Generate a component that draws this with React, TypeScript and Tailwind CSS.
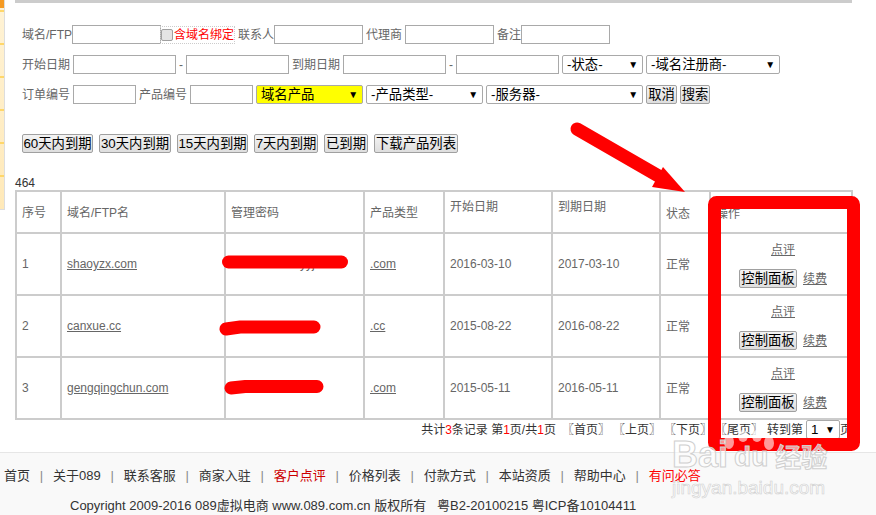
const cjk = "font-['Liberation_Sans','Noto_Sans_CJK_SC',sans-serif]";

function Field({ w }: { w: string }) {
  return <input className={`h-[19px] shrink-0 border border-[#a9a9a9] bg-white ${w}`} />;
}

function Picker({ w, label, yellow }: { w: string; label: string; yellow?: boolean }) {
  return (
    <div className={`flex h-[19px] shrink-0 items-center justify-between rounded-[2px] border border-[#a9a9a9] pl-[4px] pr-[4px] text-[13.33px] text-black ${yellow ? 'bg-[#ffff00]' : 'bg-white'} ${w}`}>
      <span>{label}</span>
      <span className="text-[10px]">▼</span>
    </div>
  );
}

function Btn({ children, className = '' }: { children: React.ReactNode; className?: string }) {
  return (
    <button className={`flex h-[19px] shrink-0 items-center justify-center rounded-[2px] border border-[#a0a0a0] bg-linear-to-b from-[#f4f4f4] to-[#dedede] text-[13.33px] text-black ${className}`}>
      {children}
    </button>
  );
}

const rows = [
  { no: '1', name: 'shaoyzx.com', type: '.com', start: '2016-03-10', end: '2017-03-10' },
  { no: '2', name: 'canxue.cc', type: '.cc', start: '2015-08-22', end: '2016-08-22' },
  { no: '3', name: 'gengqingchun.com', type: '.com', start: '2015-05-11', end: '2016-05-11' },
];

const navItems = ['首页', '关于089', '联系客服', '商家入驻', '客户点评', '价格列表', '付款方式', '本站资质', '帮助中心', '有问必答'];

const td = 'border-2 border-[#cccccc] px-[5px] font-normal';

export default function App() {
  return (
    <div className={`relative h-[515px] w-[876px] overflow-hidden bg-white text-left text-[12px] text-[#666666] ${cjk}`}>
      {/* left side strip */}
      <div className="absolute left-0 top-0 flex h-[210px] w-[5px] flex-col border-r border-b border-[#dddddd] bg-linear-to-b from-[#fff3d6] to-[#ffe9b8]">
        <div className="h-[8px] shrink-0 bg-[#f59a23]" />
        <div className="flex flex-col gap-[31px] pt-[2px]">
          {[0, 1, 2, 3, 4, 5].map((n) => (
            <div key={n} className="h-[2px] bg-[#ffd76a]" />
          ))}
        </div>
      </div>

      <div className="ml-[15px] h-[3px] w-[837px] bg-[#cccccc]" />

      {/* search form */}
      <div className="ml-[22px] mt-[22px] flex h-[19px] items-center">
        <span>域名/FTP</span>
        <Field w="w-[89px]" />
        <span className="flex h-[16px] items-center text-[#ff0000] outline-1 outline-dotted outline-[#cccccc]">
          <span className="mr-[1px] size-[12px] rounded-[2px] border border-[#a0a0a0] bg-[#e4e4e4]" />
          含域名绑定
        </span>
        <span className="ml-[4px]">联系人</span>
        <Field w="w-[89px]" />
        <span className="mx-[3px]">代理商</span>
        <Field w="w-[89px]" />
        <span className="ml-[3px]">备注</span>
        <Field w="w-[89px]" />
      </div>
      <div className="ml-[22px] mt-[11px] flex h-[19px] items-center">
        <span className="mr-[3px]">开始日期</span>
        <Field w="w-[103px]" />
        <span className="mx-[3px]">-</span>
        <Field w="w-[103px]" />
        <span className="mx-[3px]">到期日期</span>
        <Field w="w-[103px]" />
        <span className="mx-[3px]">-</span>
        <Field w="w-[103px]" />
        <Picker w="ml-[3px] w-[81px]" label="-状态-" />
        <Picker w="ml-[3px] w-[134px]" label="-域名注册商-" />
      </div>
      <div className="ml-[22px] mt-[11px] flex h-[19px] items-center">
        <span className="mr-[3px]">订单编号</span>
        <Field w="w-[63px]" />
        <span className="mx-[3px]">产品编号</span>
        <Field w="w-[63px]" />
        <Picker w="ml-[3px] w-[107px]" label="域名产品" yellow />
        <Picker w="ml-[3px] w-[117px]" label="-产品类型-" />
        <Picker w="ml-[3px] w-[157px]" label="-服务器-" />
        <Btn className="ml-[3px] w-[31px]">取消</Btn>
        <Btn className="ml-[3px] w-[30px]">搜索</Btn>
      </div>

      {/* quick filters */}
      <div className="ml-[22px] mt-[30px] flex gap-[6px]">
        <Btn className="w-[71px]">60天内到期</Btn>
        <Btn className="w-[72px]">30天内到期</Btn>
        <Btn className="w-[71px]">15天内到期</Btn>
        <Btn className="w-[64px]">7天内到期</Btn>
        <Btn className="w-[44px]">已到期</Btn>
        <Btn className="w-[84px]">下载产品列表</Btn>
      </div>

      <div className="ml-[15px] mt-[23px] h-[14px] leading-[14px] text-[#333333]">464</div>

      {/* product table */}
      <table className="ml-[15px] w-[836px] table-fixed border-collapse text-left">
        <colgroup>
          <col className="w-[45px]" />
          <col className="w-[164px]" />
          <col className="w-[139px]" />
          <col className="w-[80px]" />
          <col className="w-[108px]" />
          <col className="w-[108px]" />
          <col className="w-[50px]" />
          <col className="w-[142px]" />
        </colgroup>
        <thead>
          <tr className="h-[42px]">
            <th className={`${td} pt-[1px] text-left`}>序号</th>
            <th className={`${td} pt-[1px] text-left`}>域名/FTP名</th>
            <th className={`${td} pt-[1px] text-left`}>管理密码</th>
            <th className={`${td} pt-[1px] text-left`}>产品类型</th>
            <th className={`${td} pb-[10px] text-left`}>开始日期</th>
            <th className={`${td} pb-[10px] text-left`}>到期日期</th>
            <th className={`${td} pt-[3px] text-left`}>状态</th>
            <th className={`${td} pt-[3px] text-left`}>操作</th>
          </tr>
        </thead>
        <tbody>
          {rows.map((r) => (
            <tr key={r.no} className="h-[62px]">
              <td className={td}>{r.no}</td>
              <td className={td}><a className="underline">{r.name}</a></td>
              <td className={td}>{r.no === '1' && <span className="ml-[69px]">yyj</span>}</td>
              <td className={td}><a className="underline">{r.type}</a></td>
              <td className={td}>{r.start}</td>
              <td className={td}>{r.end}</td>
              <td className={`${td} pt-[1px]`}>正常</td>
              <td className={`${td} pl-[7px] pr-[3px] text-center`}>
                <a className="block pt-[1px] underline">点评</a>
                <div className="mt-[10px] flex items-center justify-center gap-[6px]">
                  <Btn className="w-[58px]">控制面板</Btn>
                  <a className="underline">续费</a>
                </div>
              </td>
            </tr>
          ))}
        </tbody>
      </table>

      {/* pagination */}
      <div className="mr-[24px] flex h-[19px] items-center justify-end whitespace-pre text-[#333333]">
        <span>共计<b className="font-normal text-[#ff0000]">3</b>条记录 第<b className="font-normal text-[#ff0000]">1</b>页/共<b className="font-normal text-[#ff0000]">1</b>页</span>
        <span className="ml-[6px]">〖首页〗</span>
        <span className="ml-[3px]">〖上页〗</span>
        <span className="ml-[3px]">〖下页〗</span>
        <span className="ml-[3px]">〖尾页〗</span>
        <span className="ml-[4px]">转到第</span>
        <Picker w="ml-[3px] w-[34px]" label="1" />
        <span>页</span>
      </div>

      {/* footer */}
      <div className="mt-[13px] h-[70px] border-t border-[#e6e6e6] bg-[#f9f9f9] text-[13px] text-[#333333]">
        <div className="ml-[4px] mt-[15px] flex h-[16px] items-center">
          {navItems.map((item, i) => (
            <span key={item} className="flex items-center">
              {i > 0 && <span className="mx-[9.8px] text-[#8a8a8a]">|</span>}
              <span className={item === '客户点评' ? 'text-[#cc0000]' : item === '有问必答' ? 'text-[#ff0000]' : ''}>{item}</span>
            </span>
          ))}
        </div>
        <div className="ml-[70px] mt-[12px] whitespace-pre">Copyright 2009-2016 089虚拟电商 www.089.com.cn 版权所有   粤B2-20100215 粤ICP备10104411</div>
      </div>

      {/* annotation marks drawn over the page */}
      <svg className="pointer-events-none absolute left-0 top-0" width="876" height="515" viewBox="0 0 876 515" fill="none">
        <path d="M577 129 L662 178" stroke="#ff0000" strokeWidth="13" strokeLinecap="round" />
        <path d="M685 192 L652 187 L663 167 Z" fill="#ff0000" />
        <path d="M228.5 262 L341.5 262" stroke="#ff0000" strokeWidth="13" strokeLinecap="round" />
        <path d="M226 329 L240 327 L314 327" stroke="#ff0000" strokeWidth="13" strokeLinecap="round" />
        <path d="M231 388 L245 386.5 L317 386.5" stroke="#ff0000" strokeWidth="13" strokeLinecap="round" />
        <rect x="714.5" y="202.5" width="139" height="242" rx="2" stroke="#ff0000" strokeWidth="13" />
        {/* baidu paw */}
        <g fill="#ffffff" fillOpacity="0.6">
          <ellipse cx="729" cy="442" rx="5" ry="7" />
          <ellipse cx="743" cy="436" rx="5" ry="6" />
          <ellipse cx="757" cy="436" rx="5" ry="6" />
          <ellipse cx="769" cy="443" rx="5" ry="7" />
        </g>
      </svg>

      {/* watermark */}
      <div className="pointer-events-none absolute left-[672px] top-[436px] text-white/60">
        <div className="flex h-[38px] items-end text-[36px] font-bold leading-[38px] [-webkit-text-stroke:1px_#cfcfcf]">
          <span>Bai</span>
          <span className="ml-[6px] text-[28px] leading-[34px]">du</span>
          <span className="ml-[7px] text-[26px] leading-[32px]">经验</span>
        </div>
        <div className="mt-[4px] text-[19px] leading-[20px] [-webkit-text-stroke:0.6px_#d0d0d0]">jingyan.baidu.com</div>
      </div>
    </div>
  );
}
